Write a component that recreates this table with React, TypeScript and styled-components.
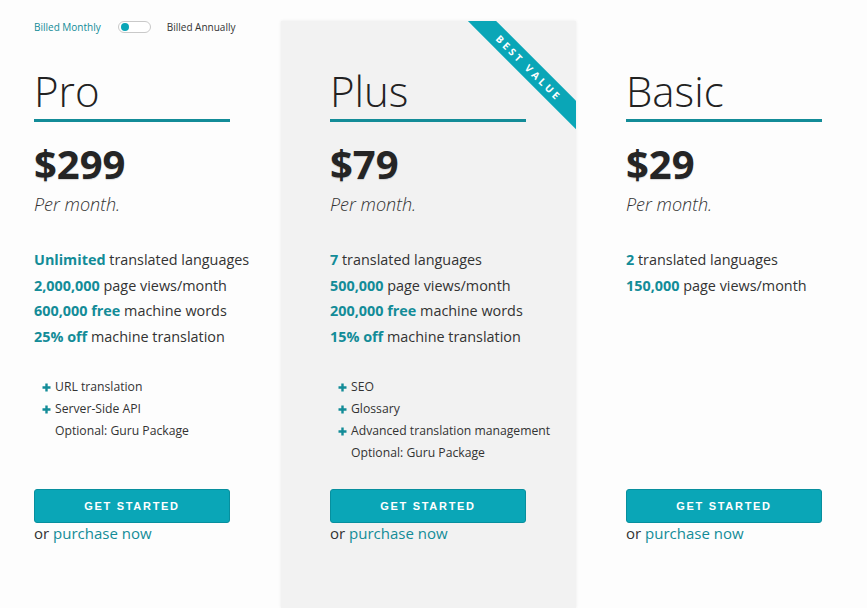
import React from "react";
import styled, { createGlobalStyle } from "styled-components";

const Global = createGlobalStyle`
  html, body { margin: 0; padding: 0; background: #fdfdfd; }
  body { font-family: "Open Sans", "Liberation Sans", sans-serif; color: #333; }
  * { box-sizing: border-box; }
`;

const TEAL = "#138c98";
const BTN = "#0aa6b7";

const Page = styled.div`
  min-height: 100vh;
  padding-top: 21px;
  display: grid;
  grid-template-columns: 281px 295px 1fr;
  overflow: hidden;
`;

const Column = styled.section<{ $featured?: boolean; $pad: number }>`
  position: relative;
  overflow: hidden;
  padding-left: ${(p) => p.$pad}px;
  min-height: calc(100vh - 21px);
  background: ${(p) => (p.$featured ? "#f2f2f2" : "transparent")};
  box-shadow: ${(p) => (p.$featured ? "0 0 3px rgba(0,0,0,0.08)" : "none")};
  display: flex;
  flex-direction: column;
`;

const Inner = styled.div`
  width: 196px;
  display: flex;
  flex-direction: column;
`;

const HeaderSlot = styled.div`
  height: 12px;
  margin-bottom: 37px;
  display: flex;
  align-items: center;
  font-size: 10px;
  white-space: nowrap;
`;

const BillLabel = styled.span<{ $active?: boolean }>`
  flex-shrink: 0;
  color: ${(p) => (p.$active ? TEAL : "#333")};
`;

const Toggle = styled.span`
  flex-shrink: 0;
  display: inline-flex;
  align-items: center;
  width: 33px;
  height: 12px;
  margin: 0 16px 0 17px;
  border: 1px solid #c9c9c9;
  border-radius: 6px;
  padding-left: 2px;
  background: #fff;
`;

const Knob = styled.span`
  width: 8px;
  height: 8px;
  border-radius: 50%;
  background: ${BTN};
`;

const Title = styled.h2`
  margin: 0;
  font-weight: 300;
  font-size: 42px;
  line-height: 42px;
  color: #222;
  padding-bottom: 7px;
  border-bottom: 3px solid ${TEAL};
`;

const Price = styled.div`
  margin-top: 22px;
  font-weight: 700;
  font-size: 40px;
  line-height: 40px;
  color: #252525;
  text-shadow: 0 1px 1px rgba(0, 0, 0, 0.15);
`;

const Period = styled.div`
  margin-top: 11px;
  font-style: italic;
  font-weight: 300;
  font-size: 18px;
  line-height: 18px;
  color: #333;
`;

const Features = styled.ul`
  list-style: none;
  margin: 34px 0 0;
  padding: 0;
  min-height: 103px;
  font-size: 14.4px;
  line-height: 25.7px;
  white-space: nowrap;
  color: #333;
`;

const Strong = styled.b`
  color: ${TEAL};
  font-weight: 700;
`;

const Extras = styled.ul`
  list-style: none;
  margin: 26px 0 0;
  padding: 0 0 0 8px;
  min-height: 113px;
  font-size: 12.2px;
  line-height: 22px;
  white-space: nowrap;
  color: #333;
`;

const Extra = styled.li<{ $plain?: boolean }>`
  display: flex;
  align-items: center;
  gap: 4px;
  padding-left: ${(p) => (p.$plain ? "13px" : "0")};
  svg { flex-shrink: 0; }
`;

const Button = styled.button`
  height: 34px;
  width: 196px;
  border: 1px solid #078f9e;
  border-radius: 3px;
  background: ${BTN};
  color: #fff;
  font-family: "Liberation Sans", Arial, sans-serif;
  font-weight: 700;
  font-size: 11px;
  letter-spacing: 1.7px;
  cursor: pointer;
`;

const Purchase = styled.div`
  font-size: 15px;
  line-height: 20px;
  color: #333;
  a { color: ${TEAL}; text-decoration: none; }
`;

const Ribbon = styled.div`
  position: absolute;
  top: 37px;
  right: -33px;
  width: 160px;
  height: 20px;
  background: ${BTN};
  transform: rotate(45deg);
  display: flex;
  align-items: center;
  justify-content: center;
  color: #fff;
  font-weight: 700;
  font-size: 10px;
  letter-spacing: 3px;
`;

const Plus = () => (
  <svg width="9" height="9" viewBox="0 0 9 9">
    <path d="M4.5 0.5v8M0.5 4.5h8" stroke={TEAL} strokeWidth="2.4" />
  </svg>
);

type Plan = {
  name: string;
  price: string;
  features: [string, string][];
  extras: string[];
  optional: boolean;
  featured?: boolean;
  pad: number;
  toggle?: boolean;
};

const plans: Plan[] = [
  {
    name: "Pro",
    price: "$299",
    features: [
      ["Unlimited", "translated languages"],
      ["2,000,000", "page views/month"],
      ["600,000 free", "machine words"],
      ["25% off", "machine translation"],
    ],
    extras: ["URL translation", "Server-Side API"],
    optional: true,
    pad: 34,
    toggle: true,
  },
  {
    name: "Plus",
    price: "$79",
    features: [
      ["7", "translated languages"],
      ["500,000", "page views/month"],
      ["200,000 free", "machine words"],
      ["15% off", "machine translation"],
    ],
    extras: ["SEO", "Glossary", "Advanced translation management"],
    optional: true,
    featured: true,
    pad: 49,
  },
  {
    name: "Basic",
    price: "$29",
    features: [
      ["2", "translated languages"],
      ["150,000", "page views/month"],
    ],
    extras: [],
    optional: false,
    pad: 50,
  },
];

export default function App() {
  return (
    <>
      <Global />
      <Page>
        {plans.map((p) => (
          <Column key={p.name} $featured={p.featured} $pad={p.pad}>
            {p.featured && <Ribbon>BEST VALUE</Ribbon>}
            <Inner>
              <HeaderSlot>
                {p.toggle && (
                  <>
                    <BillLabel $active>Billed Monthly</BillLabel>
                    <Toggle>
                      <Knob />
                    </Toggle>
                    <BillLabel>Billed Annually</BillLabel>
                  </>
                )}
              </HeaderSlot>
              <Title>{p.name}</Title>
              <Price>{p.price}</Price>
              <Period>Per month.</Period>
              <Features>
                {p.features.map(([b, t]) => (
                  <li key={t}>
                    <Strong>{b}</Strong> {t}
                  </li>
                ))}
              </Features>
              <Extras>
                {p.extras.map((e) => (
                  <Extra key={e}>
                    <Plus />
                    {e}
                  </Extra>
                ))}
                {p.optional && <Extra $plain>Optional: Guru Package</Extra>}
              </Extras>
              <Button>GET STARTED</Button>
              <Purchase>
                or <a href="#">purchase now</a>
              </Purchase>
            </Inner>
          </Column>
        ))}
      </Page>
    </>
  );
}
